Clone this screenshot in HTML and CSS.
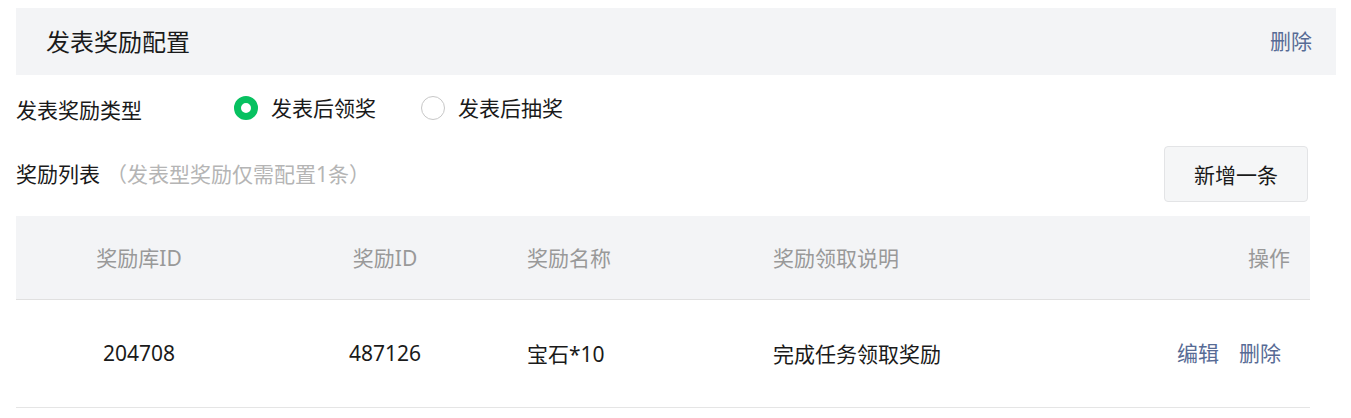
FILE: index.html
```html
<!DOCTYPE html>
<html lang="zh-CN">
<head>
<meta charset="utf-8">
<link rel="stylesheet" href="styles.css">
</head>
<body>
<div class="page">
  <div class="panel-head">
    <span class="panel-title">发表奖励配置</span>
    <a class="link">删除</a>
  </div>
  <div class="type-row">
    <span class="type-label">发表奖励类型</span>
    <div class="radios">
      <label class="radio"><span class="dot checked"></span>发表后领奖</label>
      <label class="radio"><span class="dot"></span>发表后抽奖</label>
    </div>
  </div>
  <div class="list-row">
    <div class="list-title">奖励列表<span class="hint">（发表型奖励仅需配置1条）</span></div>
    <button class="btn">新增一条</button>
  </div>
  <table class="table">
    <colgroup>
      <col class="c1"><col class="c2"><col class="c3"><col class="c4"><col class="c5">
    </colgroup>
    <thead>
      <tr>
        <th class="center">奖励库ID</th>
        <th class="center">奖励ID</th>
        <th>奖励名称</th>
        <th>奖励领取说明</th>
        <th class="right">操作</th>
      </tr>
    </thead>
    <tbody>
      <tr>
        <td class="center">204708</td>
        <td class="center">487126</td>
        <td>宝石*10</td>
        <td>完成任务领取奖励</td>
        <td class="right actions"><a class="link">编辑</a><a class="link ml">删除</a></td>
      </tr>
    </tbody>
  </table>
</div>
</body>
</html>
```
FILE: styles.css
```css
* { box-sizing: border-box; }
html, body { margin: 0; padding: 0; background: #fff; }
body {
  font-family: "Noto Sans", "Noto Sans CJK SC", sans-serif;
  font-size: 21px;
  color: #1a1a1a;
}
.page { padding: 8px 15px 0 16px; width: 1351px; }
.panel-head {
  height: 67px;
  background: #f3f4f6;
  display: flex;
  align-items: center;
  justify-content: space-between;
  padding: 0 24px 0 30px;
}
.panel-title { font-size: 24px; color: #1a1a1a; line-height: 1; }
.link { color: #576b95; cursor: pointer; line-height: 1; }
.type-row {
  display: flex;
  align-items: center;
  height: 66px;
}
.type-label { width: 218px; line-height: 1; padding-top: 5px; }
.radios { display: flex; gap: 45px; }
.radio { display: flex; align-items: center; line-height: 1; cursor: pointer; }
.dot {
  width: 24px; height: 24px;
  border-radius: 50%;
  border: 1px solid #c7c7c7;
  margin-right: 13px;
  background: #fff;
}
.dot.checked { border: 7px solid #07c160; }
.list-row {
  display: flex;
  align-items: center;
  justify-content: space-between;
  width: 1292px;
  height: 56px;
  margin-top: 5px;
}
.list-title { line-height: 1; }
.hint { color: #b5b5b5; margin-left: 6px; }
.btn {
  width: 144px; height: 56px;
  border: 1px solid #e3e4e6;
  border-radius: 4px;
  background: #f5f6f7;
  font-family: inherit;
  font-size: 21px;
  color: #1a1a1a;
}
.table {
  width: 1294px;
  border-collapse: collapse;
  table-layout: fixed;
  margin-top: 14px;
}
.c1, .c2, .c3, .c4 { width: 246px; }
.table th {
  height: 83px;
  background: #f3f4f6;
  font-weight: normal;
  color: #999;
  text-align: left;
  padding: 0 19px;
  border-bottom: 1px solid #e0e0e0;
}
.table td {
  height: 108px;
  padding: 0 19px;
  border-bottom: 1px solid #e5e5e5;
}
.table .center { text-align: center; }
.table .right { text-align: right; padding-right: 20px; }
.table .actions { padding-right: 29px; }
.ml { margin-left: 20px; }
```
